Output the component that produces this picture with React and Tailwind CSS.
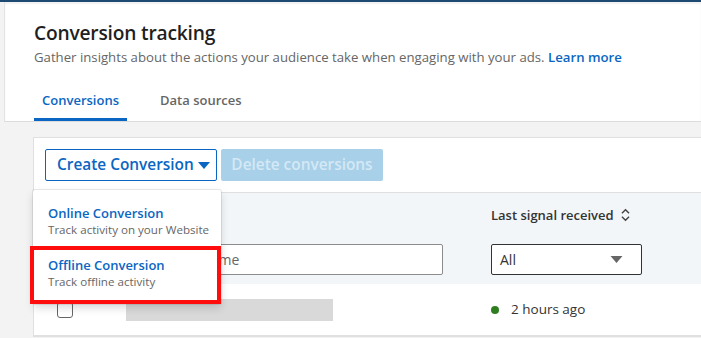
import React from "react";

const font = { fontFamily: '"Open Sans", "Noto Sans", Arial, sans-serif' };

const Caret = ({ className }) => (
  <svg viewBox="0 0 12 8" className={className} fill="currentColor">
    <path d="M0 0h12L6 7z" />
  </svg>
);

const SortIcon = () => (
  <svg viewBox="0 0 12 18" className="w-[11px] h-[16px] text-[#444]" fill="none" stroke="currentColor" strokeWidth="1.6">
    <path d="M2 7l4-4 4 4M2 11l4 4 4-4" />
  </svg>
);

export default function App() {
  return (
    <div
      className="relative w-[701px] h-[338px] overflow-hidden bg-[#f3f3f3] border-t-2 border-[#1d4a72]"
      style={font}
    >
      {/* header */}
      <div className="ml-[4px] bg-white border-l border-[#e4e4e4] border-b border-b-[#dcdcdc] pl-[29px] shadow-[inset_0_2px_2px_rgba(0,0,0,0.06)]">
        <h1 className="pt-[17px] text-[19.2px] leading-[28px] font-semibold text-[#1f1f1f] tracking-[-0.2px]">
          Conversion tracking
        </h1>
        <p className="text-[13.2px] leading-[20px] text-[#666]">
          Gather insights about the actions your audience take when engaging with your ads.{" "}
          <span className="font-semibold text-[#0a66c2]">Learn more</span>
        </p>
        <div className="flex mt-[23px] text-[13px] leading-[20px]">
          <div className="w-[93px] border-b-[3px] border-[#0a66c2] pb-[8px] text-center font-semibold text-[#0a66c2]">
            Conversions
          </div>
          <div className="ml-[33px] text-[#666] font-semibold pb-[8px]">Data sources</div>
        </div>
      </div>

      {/* card */}
      <div className="ml-[33px] mt-[15px] bg-white border border-[#e0e0e0] border-r-0">
        <div className="flex gap-[4px] px-[11px] pt-[11px] pb-[11px] border-b border-[#e0e0e0]">
          <button className="flex items-center h-[32px] w-[172px] border border-[#0a66c2] rounded-[2px] pl-[11px] text-[15.4px] font-semibold text-[#0a66c2]">
            Create Conversion
            <Caret className="w-[12px] h-[8px] ml-[4px] mt-[1px]" />
          </button>
          <button className="h-[32px] w-[162px] rounded-[2px] bg-[#a8d0e9] text-[15.4px] font-semibold text-[#d4e8f5]">
            Delete conversions
          </button>
        </div>

        <div className="bg-[#f3f6f8] h-[91px] pt-[12px]">
          <div className="flex">
            <div className="w-[457px]" />
            <div className="flex items-center gap-[6px] text-[13px] leading-[20px] font-semibold text-[#333]">
              Last signal received
              <SortIcon />
            </div>
          </div>
          <div className="flex mt-[19px]">
            <div className="w-[92px]" />
            <div className="w-[317px] h-[31px] border border-[#8c8c8c] rounded-[2px] bg-white flex items-center px-[8px] text-[14px] text-[#666]">
              Search by name
            </div>
            <div className="w-[48px]" />
            <div className="w-[151px] h-[31px] border border-[#333] rounded-[2px] bg-white flex items-center justify-between px-[8px] text-[14px] text-[#333]">
              All
              <Caret className="w-[13px] h-[8px] text-[#666] mr-[10px]" />
            </div>
          </div>
        </div>

        <div className="flex items-center h-[52px] border-b border-[#e0e0e0]">
          <div className="w-[23px]" />
          <div className="w-[16px] h-[16px] border border-[#666] rounded-[3px]" />
          <div className="w-[53px]" />
          <div className="w-[207px] h-[22px] bg-[#d9d9d9]" />
          <div className="w-[158px]" />
          <div className="w-[8px] h-[8px] rounded-full bg-[#2e7d1f]" />
          <div className="ml-[12px] text-[13.5px] text-[#333]">2 hours ago</div>
        </div>
      </div>

      {/* dropdown menu */}
      <div className="absolute left-[33px] top-[188px] w-[188px] bg-white rounded-[2px] shadow-[0_0_0_1px_rgba(0,0,0,0.08),0_4px_8px_rgba(0,0,0,0.15)]">
        <div className="px-[15px] pt-[14px] pb-[8px]">
          <div className="text-[13px] leading-[18px] font-semibold text-[#0a66c2]">Online Conversion</div>
          <div className="text-[11.6px] leading-[16px] text-[#666] whitespace-nowrap">Track activity on your Website</div>
        </div>
        <div className="relative px-[15px] pt-[10px] pb-[14px]">
          <div className="text-[13px] leading-[18px] font-semibold text-[#0a66c2]">Offline Conversion</div>
          <div className="text-[11.6px] leading-[16px] text-[#666] whitespace-nowrap">Track offline activity</div>
          <div className="absolute -left-[3px] right-0 top-0 bottom-0 border-[4px] border-[#ff0d0d]" />
        </div>
      </div>
    </div>
  );
}
